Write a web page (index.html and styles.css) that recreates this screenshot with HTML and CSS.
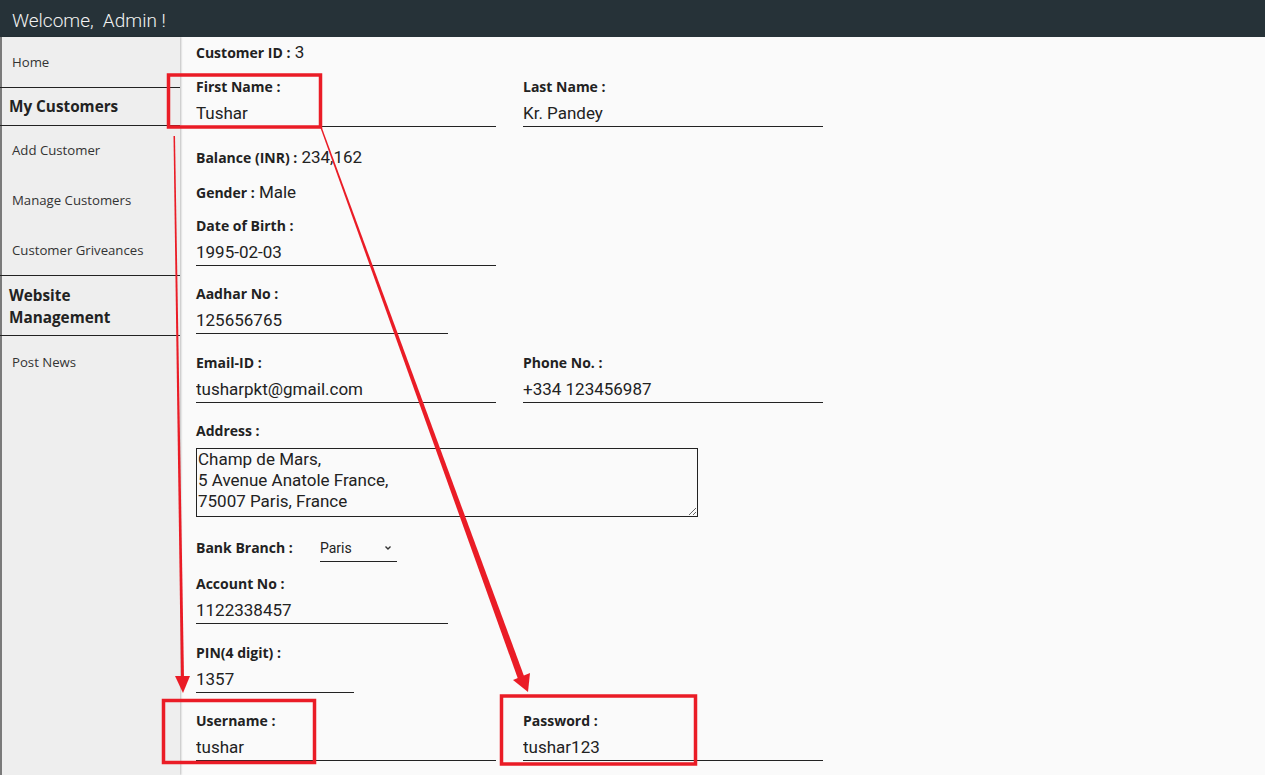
FILE: index.html
```html
<!DOCTYPE html>
<html lang="en">
<head>
<meta charset="utf-8">
<title>Admin - Customer</title>
<link rel="stylesheet" href="styles.css">
</head>
<body>
<header class="topbar">Welcome,&nbsp; Admin !</header>
<div class="layout">
  <nav class="sidebar">
    <a class="nav-item">Home</a>
    <div class="nav-head">My Customers</div>
    <a class="nav-item">Add Customer</a>
    <a class="nav-item">Manage Customers</a>
    <a class="nav-item">Customer Griveances</a>
    <div class="nav-head two">Website Management</div>
    <a class="nav-item">Post News</a>
  </nav>
  <main class="content">
    <div class="text-row first"><span class="lbl">Customer ID :</span> <span class="val">3</span></div>
    <div class="pair">
      <div class="field"><div class="lbl">First Name :</div><input class="inp w300" value="Tushar"></div>
      <div class="field"><div class="lbl">Last Name :</div><input class="inp w300" value="Kr. Pandey"></div>
    </div>
    <div class="text-row"><span class="lbl">Balance (INR) :</span> <span class="val">234,162</span></div>
    <div class="text-row gender"><span class="lbl">Gender :</span> <span class="val">Male</span></div>
    <div class="field"><div class="lbl">Date of Birth :</div><input class="inp w300" value="1995-02-03"></div>
    <div class="field"><div class="lbl">Aadhar No :</div><input class="inp w252" value="125656765"></div>
    <div class="pair">
      <div class="field"><div class="lbl">Email-ID :</div><input class="inp w300" value="tusharpkt@gmail.com"></div>
      <div class="field"><div class="lbl">Phone No. :</div><input class="inp w300" value="+334 123456987"></div>
    </div>
    <div class="field addr"><div class="lbl">Address :</div><textarea class="area">Champ de Mars,
5 Avenue Anatole France,
75007 Paris, France</textarea></div>
    <div class="branch"><span class="lbl branch-lbl">Bank Branch :</span><select class="sel"><option>Paris</option></select></div>
    <div class="field"><div class="lbl">Account No :</div><input class="inp w252" value="1122338457"></div>
    <div class="field"><div class="lbl">PIN(4 digit) :</div><input class="inp w158" value="1357"></div>
    <div class="pair">
      <div class="field"><div class="lbl">Username :</div><input class="inp w300" value="tushar"></div>
      <div class="field"><div class="lbl">Password :</div><input class="inp w300" value="tushar123"></div>
    </div>
  </main>
</div>
<svg class="marks" width="1265" height="775" viewBox="0 0 1265 775">
  <g fill="none" stroke="#ea1c26" stroke-width="3.5">
    <rect x="168.5" y="75" width="152" height="52"/>
    <rect x="163.5" y="700.5" width="151" height="62"/>
    <rect x="501.5" y="696" width="194" height="68"/>
  </g>
  <g fill="#ea1c26">
    <polygon points="173.5,136 175,136 184,678 181,678"/>
    <polygon points="175,676 190,676 183,693"/>
    <polygon points="320.5,128 322,128 524,676 518,679"/>
    <polygon points="513,680 530,673 528,692"/>
  </g>
</svg>
</body>
</html>
```

FILE: styles.css
```css
* { box-sizing: border-box; }
html, body { margin: 0; padding: 0; }
body {
  width: 1265px;
  height: 775px;
  overflow: hidden;
  background: #fafafa;
  font-family: "Open Sans", "Liberation Sans", sans-serif;
  color: #222;
  position: relative;
}
.topbar {
  height: 37px;
  background: #263238;
  color: #f2f2f2;
  font-family: Roboto, "Liberation Sans", sans-serif;
  font-weight: 300;
  font-size: 19px;
  line-height: 42px;
  padding-left: 12px;
  white-space: pre;
}
.layout { display: flex; height: 738px; }
.sidebar {
  width: 180px;
  flex: none;
  background: #eeeeee;
  border-left: 2px solid #7a7a7a;
  box-shadow: 1px 0 2px rgba(0,0,0,0.25);
  display: flex;
  flex-direction: column;
  position: relative;
  z-index: 1;
}
.nav-item {
  display: block;
  height: 50px;
  line-height: 51px;
  padding-left: 10px;
  font-size: 13.2px;
  color: #333;
}
.nav-head {
  border-top: 1px solid #222;
  border-bottom: 1px solid #222;
  margin-left: -2px;
  padding-left: 9px;
  font-weight: 700;
  font-size: 15.3px;
  color: #222;
  height: 39px;
  line-height: 37px;
}
.nav-head + .nav-item { margin-top: -1px; }
.nav-head.two {
  height: 61px;
  line-height: 22px;
  padding-top: 8px;
  padding-right: 40px;
  margin-top: 0;
}
.nav-head.two + .nav-item { margin-top: 0; line-height: 52px; }
.content {
  flex: 1;
  padding: 4px 0 0 16px;
}
.lbl {
  font-weight: 700;
  font-size: 14px;
  color: #222;
  line-height: 20px;
}
.val {
  font-family: Roboto, "Liberation Sans", sans-serif;
  font-size: 17px;
  color: #222;
}
.text-row {
  line-height: 22px;
  height: 22px;
  margin-bottom: 14px;
}
.text-row.gender { margin-bottom: 12px; line-height: 20px; }
.pair { display: flex; gap: 27px; }
.field { margin-bottom: 18.5px; }
.field .lbl { margin-bottom: 3px; }
.inp {
  display: block;
  height: 27px;
  border: none;
  border-bottom: 1px solid #222;
  background: transparent;
  padding: 0;
  font-family: Roboto, "Liberation Sans", sans-serif;
  font-size: 17px;
  color: #222;
  outline: none;
}
.w300 { width: 300px; }
.w252 { width: 252px; }
.w158 { width: 158px; }
.field.addr { margin-bottom: 20px; }
.field.addr .lbl { margin-bottom: 7px; }
.area {
  display: block;
  width: 502px;
  height: 69px;
  border: 1px solid #222;
  background: transparent;
  padding: 0 1px;
  font-family: Roboto, "Liberation Sans", sans-serif;
  font-size: 17px;
  line-height: 21px;
  color: #222;
  resize: both;
  outline: none;
}
.branch {
  display: flex;
  align-items: center;
  height: 24px;
  margin-bottom: 13px;
}
.branch-lbl { width: 124px; flex: none; margin-top: -2px; }
.sel {
  appearance: none;
  -webkit-appearance: none;
  width: 77px;
  height: 24px;
  border: none;
  border-bottom: 1px solid #222;
  border-radius: 0;
  padding: 0 0 3px 0;
  margin-top: 1px;
  background: transparent url("data:image/svg+xml;utf8,<svg xmlns='http://www.w3.org/2000/svg' width='8' height='6' viewBox='0 0 8 6'><path d='M1.5 1.5 L4 4 L6.5 1.5' fill='none' stroke='%23333' stroke-width='1.4'/></svg>") no-repeat 64px 7px;
  font-family: Roboto, "Liberation Sans", sans-serif;
  font-size: 14px;
  color: #222;
  outline: none;
}
.marks {
  position: absolute;
  left: 0;
  top: 0;
  pointer-events: none;
  z-index: 5;
}
```
